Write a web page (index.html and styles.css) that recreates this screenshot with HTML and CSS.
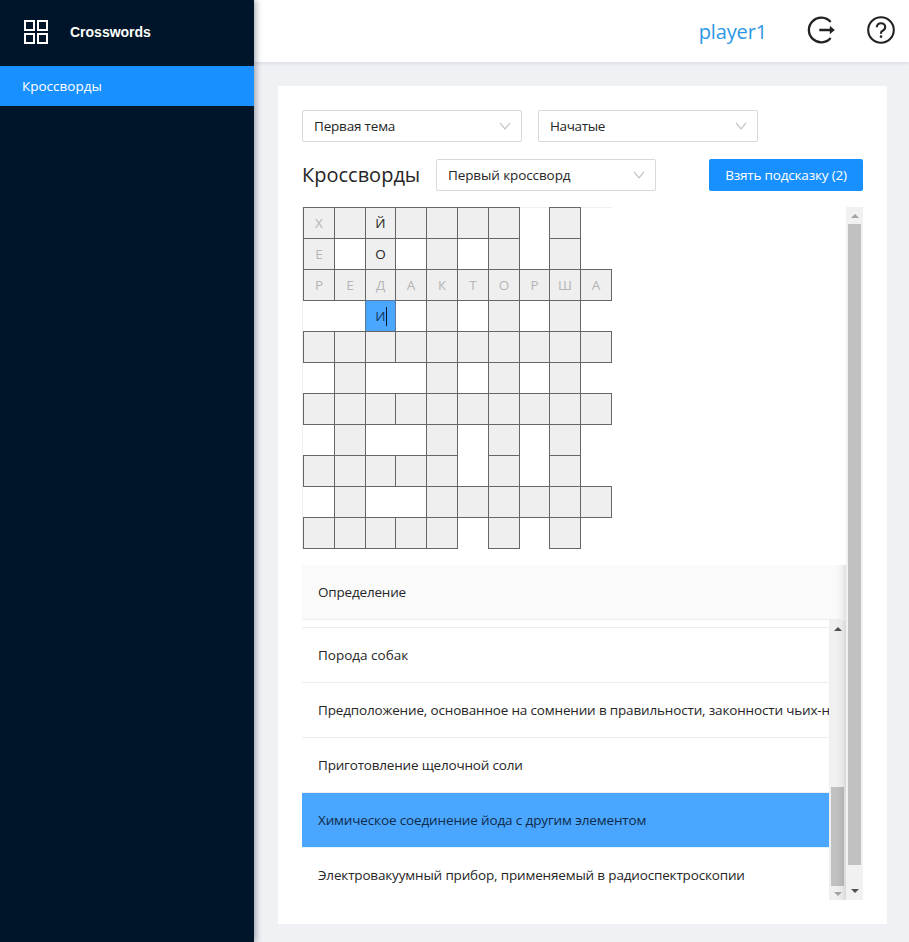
FILE: index.html
```html
<!DOCTYPE html>
<html lang="ru">
<head>
<meta charset="utf-8">
<title>Crosswords</title>
<link rel="stylesheet" href="styles.css">
</head>
<body>
<div class="layout">
  <aside class="sider">
    <div class="brand">
      <svg class="brand-icon" viewBox="0 0 24 24" fill="none" stroke="#fff" stroke-width="2"><path d="M1 1h9v9H1zM14 1h9v9h-9zM1 14h9v9H1zM14 14h9v9h-9z"/></svg>
      <span class="brand-name">Crosswords</span>
    </div>
    <nav><a class="menu-item"><span class="t-menu">Кроссворды</span></a></nav>
  </aside>
  <div class="main">
    <header class="header">
      <span class="user">player1</span>
      <svg class="head-icon" viewBox="0 0 28 28" fill="none" stroke="#222" stroke-width="2.3"><path d="M23.6 6.1A12.3 12.3 0 1 0 23.6 21.9M12.3 14h12"/><path d="M22.8 9.8v8.4l5-4.2z" fill="#222" stroke="none"/></svg>
      <svg class="head-icon" viewBox="0 0 28 28" fill="none" stroke="#222" stroke-width="2.1"><circle cx="14" cy="14" r="12.8"/><path d="M9.8 11.3c0-2.5 1.8-4.1 4.2-4.1s4.2 1.6 4.2 3.9c0 1.8-1 3-2.5 3.7-1.1.5-1.7 1.1-1.7 2.2v.8"/><circle cx="14" cy="20.6" r="1.3" fill="#222" stroke="none"/></svg>
    </header>
    <main class="panel">
      <div class="filters">
        <div class="select"><span class="t-theme">Первая тема</span><svg viewBox="0 0 12 8"><path d="M1 .8l5 6 5-6"/></svg></div>
        <div class="select"><span class="t-state">Начатые</span><svg viewBox="0 0 12 8"><path d="M1 .8l5 6 5-6"/></svg></div>
      </div>
      <div class="title-row">
        <h1>Кроссворды</h1>
        <div class="select"><span class="t-first">Первый кроссворд</span><svg viewBox="0 0 12 8"><path d="M1 .8l5 6 5-6"/></svg></div>
        <button class="hint"><span class="t-hint">Взять подсказку (2)</span></button>
      </div>
      <div class="scroller">
        <div class="content">
          <div class="crossword">
            <b>Х</b><b></b><b class="own">Й</b><b></b><b></b><b></b><b></b><i></i><b></b><i></i>
            <b>Е</b><i></i><b class="own">О</b><i></i><b></b><i></i><b></b><i></i><b></b><i></i>
            <b>Р</b><b>Е</b><b>Д</b><b>А</b><b>К</b><b>Т</b><b>О</b><b>Р</b><b>Ш</b><b>А</b>
            <i></i><i></i><b class="active">И<span class="caret"></span></b><i></i><b></b><i></i><b></b><i></i><b></b><i></i>
            <b></b><b></b><b></b><b></b><b></b><b></b><b></b><b></b><b></b><b></b>
            <i></i><b></b><i></i><i></i><b></b><i></i><b></b><i></i><b></b><i></i>
            <b></b><b></b><b></b><b></b><b></b><b></b><b></b><b></b><b></b><b></b>
            <i></i><b></b><i></i><i></i><b></b><i></i><b></b><i></i><b></b><i></i>
            <b></b><b></b><b></b><b></b><b></b><i></i><b></b><i></i><b></b><i></i>
            <i></i><b></b><i></i><i></i><b></b><b></b><b></b><b></b><b></b><b></b>
            <b></b><b></b><b></b><b></b><b></b><i></i><b></b><i></i><b></b><i></i>
          </div>
          <section class="table">
            <div class="thead"><span class="t-def">Определение</span></div>
            <div class="tbody">
              <div class="rows">
                <div class="row sliver"></div>
                <div class="row"><span class="t-r1">Порода собак</span></div>
                <div class="row"><span class="t-r2">Предположение, основанное на сомнении в правильности, законности чьих-нибудь</span></div>
                <div class="row"><span class="t-r3">Приготовление щелочной соли</span></div>
                <div class="row selected"><span class="t-r4">Химическое соединение йода с другим элементом</span></div>
                <div class="row"><span class="t-r5">Электровакуумный прибор, применяемый в радиоспектроскопии</span></div>
              </div>
              <div class="bar inner"><span class="up dark"></span><span class="thumb"></span><span class="down"></span></div>
            </div>
          </section>
        </div>
        <div class="bar outer"><span class="up"></span><span class="thumb"></span><span class="down dark"></span></div>
      </div>
    </main>
  </div>
</div>
</body>
</html>
```
FILE: styles.css
```css
* { box-sizing: border-box; }
body {
  margin: 0;
  background: #eff1f5;
  color: #262626;
  font: 13.5px/22px "Open Sans", "Noto Sans", sans-serif;
}
.layout { display: flex; height: 942px; overflow: hidden; }
.sider {
  width: 254px;
  flex: none;
  background: #001529;
  box-shadow: 2px 0 6px rgba(0, 21, 41, .35);
  z-index: 2;
}
.brand { display: flex; align-items: center; height: 66px; padding: 0 0 2px 24px; }
.brand-icon { width: 24px; height: 24px; margin-right: 22px; }
.brand-name { color: #fff; font: bold 14px/20px "Liberation Sans", sans-serif; }
.menu-item {
  display: flex;
  align-items: center;
  height: 40px;
  padding-left: 22px;
  background: #1890ff;
  color: #fff;
}
.main { flex: 1; min-width: 0; display: flex; flex-direction: column; }
.header {
  display: flex;
  align-items: center;
  justify-content: flex-end;
  flex: none;
  height: 62px;
  padding: 0 14px 2px 0;
  background: #fff;
  box-shadow: 0 1px 4px rgba(0, 21, 41, .12);
}
.user { color: #2d97e5; font-size: 20px; line-height: 30px; padding-top: 4px; letter-spacing: -.15px; }
.head-icon { width: 28px; height: 28px; margin-left: 32px; }
.user + .head-icon { margin-left: 40px; }
.panel {
  width: 609px;
  height: 838px;
  margin: 24px 0 0 24px;
  padding: 24px;
  background: #fff;
}
.filters { display: flex; gap: 16px; }
.select {
  display: flex;
  align-items: center;
  justify-content: space-between;
  width: 220px;
  height: 32px;
  padding: 0 10px 0 11px;
  border: 1px solid #d9d9d9;
  border-radius: 2px;
}
.select svg { width: 12px; height: 8px; fill: none; stroke: #bfbfbf; stroke-width: 1.1; }
.title-row { display: flex; align-items: center; height: 32px; margin: 17px 0 16px; }
h1 { width: 134px; margin: 0; font-size: 20px; line-height: 32px; font-weight: 400; white-space: nowrap; }
.hint {
  width: 154px;
  height: 32px;
  margin-left: auto;
  padding: 0;
  border: 0;
  border-radius: 2px;
  background: #1890ff;
  color: #fff;
  font: inherit;
  white-space: nowrap;
}
.t-theme, .t-hint, .t-def, .t-r3 { letter-spacing: -.19px; }
.t-state { letter-spacing: -.35px; }
.t-first { letter-spacing: -.1px; }
.t-r2, .t-r5 { letter-spacing: -.165px; }
.t-r4 { letter-spacing: -.14px; }
.scroller { display: flex; height: 693px; }
.content { width: 544px; }
.crossword {
  display: grid;
  grid-template-columns: 31px 31px 30px 31px 31px 31px 31px 30px 31px 31px;
  grid-auto-rows: 31px;
  width: 310px;
  height: 342px;
  border-left: 1px solid #efefef;
  box-shadow: inset 0 1px #efefef;
}
.crossword b {
  display: flex;
  align-items: center;
  justify-content: center;
  margin: 0 -1px -1px 0;
  border: 1px solid #666;
  background: #efefef;
  color: #b5b5b5;
  font-weight: 400;
}
.crossword .own { color: #222; }
.crossword .active { background: #4aa6ff; color: #10345c; border-color: #5a7695; padding-left: 1px; }
.caret { width: 1px; height: 19px; background: #001529; }
.table { margin-top: 16px; }
.thead {
  height: 55px;
  padding: 16px;
  border-bottom: 1px solid #ededed;
  background: linear-gradient(to right, #fafafa 534px, #f0f0f0 540px, #dedede);
}
.tbody { display: flex; height: 280px; }
.rows { width: 527px; height: 280px; overflow: hidden; }
.row { height: 55px; padding: 16px; border-bottom: 1px solid #ededed; white-space: nowrap; }
.sliver { height: 8px; padding: 0; }
.selected { background: #4aa6ff; color: #0f2b4b; border-color: #e0f2fb; }
.row:last-child { border: 0; }
.bar { display: flex; flex-direction: column; align-items: center; width: 17px; background: #f1f1f1; }
.inner { background: linear-gradient(to right, #f0f0f0 7px, #e8e8e8 13px, #d8d8d8); }
.thumb { width: 13px; background: #c1c1c1; }
.inner .thumb { height: 99px; margin: 156px 0 6px; background: linear-gradient(to right, #c1c1c1 5px, #b2b2b2); }
.outer .thumb { height: 641px; margin: 6px 0 24px; }
.up, .down { border: 4px solid transparent; height: 0; }
.up { border-top: 0; border-bottom-color: #a3a3a3; margin-top: 7px; }
.down { border-bottom: 0; border-top-color: #a3a3a3; }
.up.dark { border-bottom-color: #505050; }
.down.dark { border-top-color: #505050; }
```
